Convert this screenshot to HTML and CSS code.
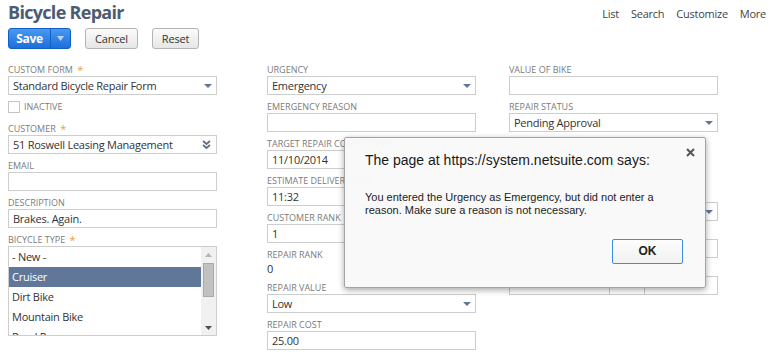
FILE: index.html
```html
<!DOCTYPE html>
<html>
<head>
  <title>Bicycle Repair</title>
  <link rel="stylesheet" href="styles.css">
</head>
<body>

  <div class="top-bar">
    <div class="head-left">
      <h1 class="page-title">Bicycle Repair</h1>
      <div class="actions">
        <div class="btn-save">
          <span class="save-main">Save</span>
          <span class="save-menu">
            <svg width="7" height="5" viewBox="0 0 7 5"><path d="M0 0 L7 0 L3.5 5 Z" fill="#b9d3f5"/></svg>
          </span>
        </div>
        <div class="btn">Cancel</div>
        <div class="btn">Reset</div>
      </div>
    </div>
    <div class="top-links">
      <a href="#">List</a>
      <a href="#">Search</a>
      <a href="#">Customize</a>
      <a href="#">More</a>
    </div>
  </div>

  <div class="form-grid">
    <div class="col">
      <div class="field">
        <div class="label">Custom Form <span class="req">*</span></div>
        <div class="input select">
          <span>Standard Bicycle Repair Form</span>
          <svg class="arrow" width="8" height="4" viewBox="0 0 8 4"><path d="M0 0 L8 0 L4 4 Z" fill="#607799"/></svg>
        </div>
      </div>
      <div class="check-row">
        <span class="checkbox"></span>
        <span class="label">Inactive</span>
      </div>
      <div class="field">
        <div class="label">Customer <span class="req">*</span></div>
        <div class="input select">
          <span>51 Roswell Leasing Management</span>
          <svg class="chevrons" width="9" height="9" viewBox="0 0 9 9"><path d="M1 1 L4.5 4 L8 1 M1 5 L4.5 8 L8 5" fill="none" stroke="#5d6f8c" stroke-width="1.8"/></svg>
        </div>
      </div>
      <div class="field">
        <div class="label">Email</div>
        <div class="input"></div>
      </div>
      <div class="field">
        <div class="label">Description</div>
        <div class="input">Brakes. Again.</div>
      </div>
      <div class="field">
        <div class="label">Bicycle Type <span class="req">*</span></div>
        <div class="listbox">
          <div class="list-items">
            <div class="list-item">- New -</div>
            <div class="list-item selected">Cruiser</div>
            <div class="list-item">Dirt Bike</div>
            <div class="list-item">Mountain Bike</div>
            <div class="list-item">Road Racer</div>
          </div>
          <div class="scrollbar">
            <div class="sb-btn">
              <svg width="7" height="4" viewBox="0 0 7 4"><path d="M0 4 L7 4 L3.5 0 Z" fill="#b5b5b5"/></svg>
            </div>
            <div class="sb-thumb"></div>
            <div class="sb-space"></div>
            <div class="sb-btn">
              <svg width="7" height="4" viewBox="0 0 7 4"><path d="M0 0 L7 0 L3.5 4 Z" fill="#505050"/></svg>
            </div>
          </div>
        </div>
      </div>
    </div>

    <div class="col">
      <div class="field">
        <div class="label">Urgency</div>
        <div class="input select">
          <span>Emergency</span>
          <svg class="arrow" width="8" height="4" viewBox="0 0 8 4"><path d="M0 0 L8 0 L4 4 Z" fill="#607799"/></svg>
        </div>
      </div>
      <div class="field">
        <div class="label">Emergency Reason</div>
        <div class="input"></div>
      </div>
      <div class="field">
        <div class="label">Target Repair Completion</div>
        <div class="input">11/10/2014</div>
      </div>
      <div class="field">
        <div class="label">Estimate Delivery Time</div>
        <div class="input">11:32</div>
      </div>
      <div class="field">
        <div class="label">Customer Rank</div>
        <div class="input">1</div>
      </div>
      <div class="field">
        <div class="label">Repair Rank</div>
        <div class="value">0</div>
      </div>
      <div class="field">
        <div class="label">Repair Value</div>
        <div class="input select">
          <span>Low</span>
          <svg class="arrow" width="8" height="4" viewBox="0 0 8 4"><path d="M0 0 L8 0 L4 4 Z" fill="#607799"/></svg>
        </div>
      </div>
      <div class="field">
        <div class="label">Repair Cost</div>
        <div class="input">25.00</div>
      </div>
    </div>

    <div class="col">
      <div class="field">
        <div class="label">Value of Bike</div>
        <div class="input"></div>
      </div>
      <div class="field">
        <div class="label">Repair Status</div>
        <div class="input select">
          <span>Pending Approval</span>
          <svg class="arrow" width="8" height="4" viewBox="0 0 8 4"><path d="M0 0 L8 0 L4 4 Z" fill="#607799"/></svg>
        </div>
      </div>
      <div class="check-row check-gap">
        <span class="checkbox"></span>
      </div>
      <div class="field">
        <div class="input select">
          <span></span>
          <svg class="arrow" width="8" height="4" viewBox="0 0 8 4"><path d="M0 0 L8 0 L4 4 Z" fill="#607799"/></svg>
        </div>
      </div>
      <div class="field">
        <div class="label"></div>
        <div class="input"></div>
      </div>
      <div class="field">
        <div class="label"></div>
        <div class="input split">
          <span class="part wide"></span>
          <span class="part"></span>
          <span class="part"></span>
        </div>
      </div>
    </div>
  </div>

  <div class="dialog">
    <div class="dialog-head">
      <div class="dialog-title">The page at https://system.netsuite.com says:</div>
      <svg class="dialog-close" width="9" height="9" viewBox="0 0 9 9"><path d="M1 1 L8 8 M8 1 L1 8" stroke="#555" stroke-width="2"/></svg>
    </div>
    <div class="dialog-text">You entered the Urgency as Emergency, but did not enter a reason. Make sure a reason is not necessary.</div>
    <div class="dialog-foot">
      <div class="btn-ok">OK</div>
    </div>
  </div>

</body>
</html>
```

FILE: styles.css
```css
body {
  margin: 0;
  padding: 0 6px 0 8px;
  background-color: white;
  font-family: "Open Sans", "Noto Sans", sans-serif;
  color: #333;
}

.top-bar {
  display: flex;
  justify-content: space-between;
}

.page-title {
  margin: 0;
  font-size: 18px;
  line-height: 24px;
  font-weight: bold;
  letter-spacing: -0.7px;
  color: #4d5b72;
}

.actions {
  display: flex;
  gap: 14px;
  margin-top: 4px;
}

.btn-save {
  display: flex;
  height: 21px;
  box-sizing: border-box;
  border: 1px solid #1260c4;
  border-radius: 3px;
  background: linear-gradient(to bottom, #4a98f2, #1c6fdc);
  color: white;
  font-size: 12px;
  font-weight: bold;
  letter-spacing: -0.3px;
}

.save-main {
  width: 41px;
  text-align: center;
  line-height: 19px;
}

.save-menu {
  width: 19px;
  border-left: 1px solid #1460c0;
  display: flex;
  align-items: center;
  justify-content: center;
}

.btn {
  height: 21px;
  box-sizing: border-box;
  padding: 0 9px;
  border: 1px solid #b4b4b4;
  border-radius: 3px;
  background: linear-gradient(to bottom, #fbfbfb, #e6e6e6);
  font-size: 11px;
  letter-spacing: -0.2px;
  line-height: 19px;
  color: #333;
}

.top-links {
  display: flex;
  gap: 12px;
  padding-top: 6px;
}

.top-links a {
  font-size: 11px;
  line-height: 16px;
  letter-spacing: -0.25px;
  color: #444;
  text-decoration: none;
}

.form-grid {
  display: grid;
  grid-template-columns: 259px 242px 209px;
  margin-top: 15px;
}

.col {
  width: 209px;
}

.field {
  margin-bottom: 6px;
}

.label {
  font-size: 9px;
  line-height: 12px;
  height: 12px;
  color: #7b7b7b;
  text-transform: uppercase;
  white-space: nowrap;
}

.req {
  color: #e7a23a;
  font-size: 11px;
  line-height: 12px;
  vertical-align: top;
  margin-left: 2px;
}

.input {
  height: 19px;
  box-sizing: border-box;
  border: 1px solid #cdcdcd;
  background: white;
  padding: 0 4px;
  font-size: 11px;
  letter-spacing: -0.25px;
  line-height: 17px;
  color: #333;
  white-space: nowrap;
}

.select {
  display: flex;
  justify-content: space-between;
  align-items: center;
  padding-right: 4px;
}

.chevrons {
  margin-right: 1px;
}

.split {
  display: flex;
  padding: 0;
}

.part {
  width: 34px;
  border-left: 1px solid #cdcdcd;
}

.part.wide {
  width: 99px;
  border-left: none;
}

.value {
  font-size: 11px;
  line-height: 15px;
  color: #333;
}

.check-row {
  display: flex;
  align-items: flex-end;
  gap: 4px;
  margin-top: 2px;
  margin-bottom: 10px;
}

.check-gap {
  margin-bottom: 52px;
}

.checkbox {
  width: 12px;
  height: 12px;
  box-sizing: border-box;
  border: 1px solid #c4c4c4;
  background: white;
}

.listbox {
  display: flex;
  height: 90px;
  box-sizing: border-box;
  border: 1px solid #cdcdcd;
  overflow: hidden;
}

.list-items {
  flex: 1;
}

.list-item {
  height: 20px;
  padding-left: 3px;
  font-size: 11px;
  letter-spacing: -0.25px;
  line-height: 20px;
  color: #333;
}

.list-item.selected {
  background-color: #607799;
  color: white;
}

.scrollbar {
  width: 15px;
  background: #f1f1f1;
  display: flex;
  flex-direction: column;
  align-items: center;
}

.sb-btn {
  height: 15px;
  display: flex;
  align-items: center;
  justify-content: center;
}

.sb-thumb {
  width: 11px;
  height: 34px;
  box-sizing: border-box;
  margin-top: 1px;
  background: #c1c1c1;
  border: 1px solid #a9a9a9;
}

.sb-space {
  flex: 1;
}

.dialog {
  position: absolute;
  left: 344px;
  top: 137px;
  width: 362px;
  height: 151px;
  box-sizing: border-box;
  padding: 10px 10px 0 20px;
  background: rgba(249, 249, 249, 0.97);
  border: 1px solid #a3a3a3;
  border-radius: 2px;
  box-shadow: 0 2px 6px rgba(0, 0, 0, 0.35);
  font-family: "Liberation Sans", Arial, sans-serif;
  color: #222;
}

.dialog-head {
  display: flex;
  justify-content: space-between;
  align-items: flex-start;
}

.dialog-title {
  font-size: 14px;
  line-height: 20px;
  margin-top: 2px;
  color: #1a1a1a;
}

.dialog-text {
  margin-top: 21px;
  width: 300px;
  font-size: 11px;
  line-height: 13px;
}

.dialog-foot {
  display: flex;
  justify-content: flex-end;
  margin-top: 22px;
  padding-right: 12px;
}

.btn-ok {
  width: 71px;
  height: 25px;
  box-sizing: border-box;
  border: 1px solid #3d8ee0;
  border-radius: 2px;
  background: linear-gradient(to bottom, #fdfdfd, #f1f1f1);
  text-align: center;
  font-size: 12px;
  font-weight: bold;
  line-height: 23px;
}
```
